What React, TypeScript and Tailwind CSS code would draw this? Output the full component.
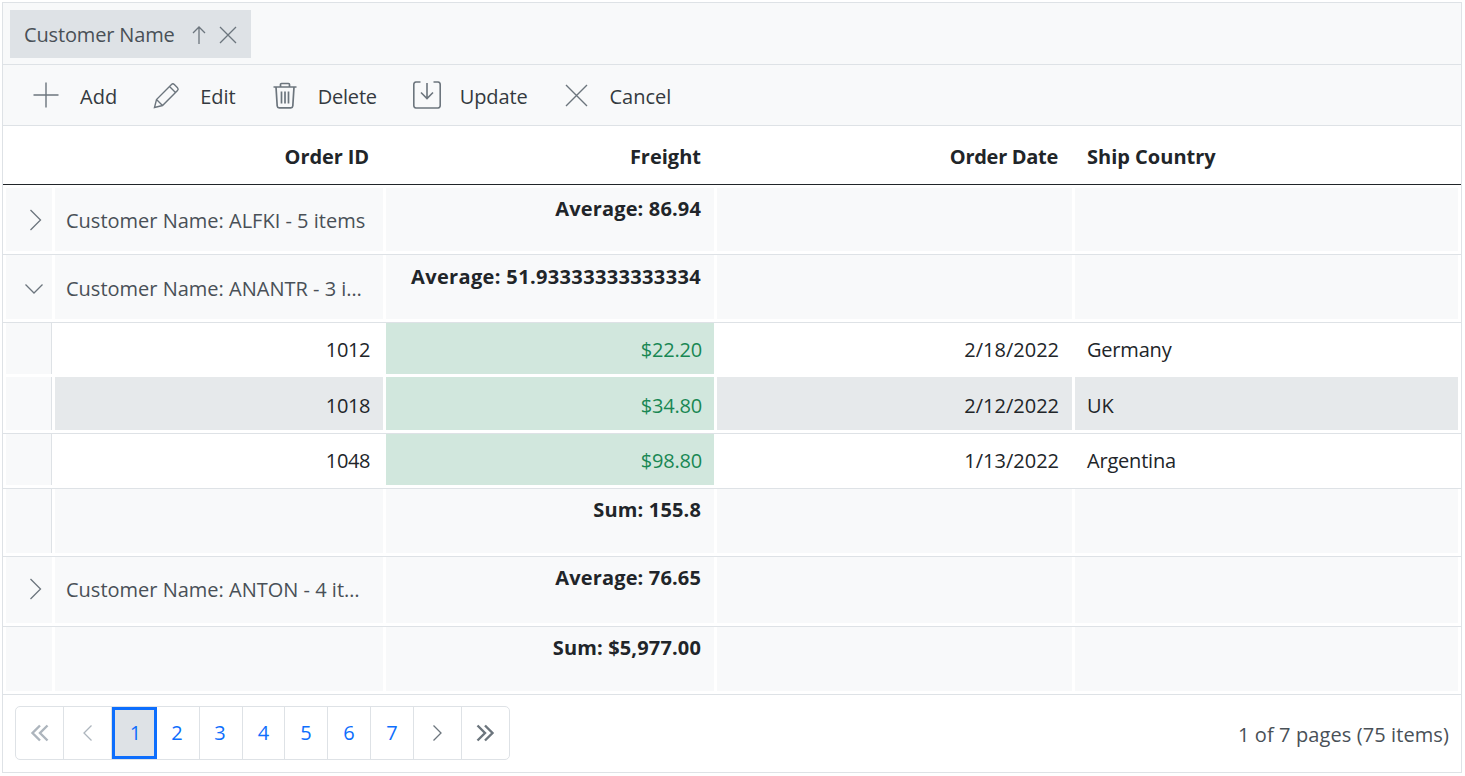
import React, { ReactNode } from 'react';

const rowCols = 'grid grid-cols-[46px_328px_328px_355px_383px] gap-x-[3px] pl-[3px]';

const Thin = ({ size = 28, stroke = 1.4, children }: { size?: number; stroke?: number; children: ReactNode }) => (
  <svg width={size} height={size} viewBox={`0 0 ${size} ${size}`} fill="none" stroke="currentColor" strokeWidth={stroke}>
    {children}
  </svg>
);

const ToolButton = ({ icon, label, gap, iconClass = '', labelClass = '' }: { icon: ReactNode; label: string; gap: string; iconClass?: string; labelClass?: string }) => (
  <div className={`flex items-center ${gap}`}>
    <span className={`text-[#6c757d] ${iconClass}`}>{icon}</span>
    <span className={`pt-[4px] text-[20px] text-[#343a40] ${labelClass}`}>{label}</span>
  </div>
);

const Cell = ({ children, className = '', h }: { children?: ReactNode; className?: string; h: string }) => (
  <div className={`flex items-center min-w-0 ${h} ${className}`}>{children}</div>
);

const GroupRow = ({ open, label, total, h, indent, wide, labelPad = 'pt-[2px]', totalPad = 'pt-[6px]' }: { open?: boolean; label: string; total: string; h: string; indent?: boolean; wide?: boolean; labelPad?: string; totalPad?: string }) => (
  <div className={`${rowCols} pb-[3px] border-b border-[#dee2e6]`}>
    <Cell h={h} className={`bg-[#f8f9fa] justify-center pl-[12px] text-[#6c757d] ${indent ? 'border-r border-[#dee2e6]' : ''} ${labelPad === 'pt-0' ? 'pb-[2px]' : ''}`}>
      {open === undefined ? null : open ? (
        <svg width="22" height="22" viewBox="0 0 22 22" fill="none" stroke="currentColor" strokeWidth="1.3" className="-ml-[3px] mt-[3px]">
          <path d="M2.5 6.5l8.5 8.5 8.5-8.5" />
        </svg>
      ) : (
        <svg width="22" height="22" viewBox="0 0 22 22" fill="none" stroke="currentColor" strokeWidth="1.3" className="ml-[1px]">
          <path d="M5.5 1l10 10-10 10" />
        </svg>
      )}
    </Cell>
    <Cell h={h} className={`bg-[#f8f9fa] pl-[11px] pr-[15px] ${labelPad} text-[#495057]`}>
      <span className="truncate text-[20px]">{label}</span>
    </Cell>
    <Cell h={h} className={`bg-[#f8f9fa] justify-end items-start pr-[13px] ${totalPad} font-bold text-[20px] text-[#212529] ${wide ? 'tracking-[0.35px]' : 'tracking-[0.15px]'}`}>
      {total}
    </Cell>
    <Cell h={h} className="bg-[#f8f9fa]" />
    <Cell h={h} className="bg-[#f8f9fa]" />
  </div>
);

const DataRow = ({ id, freight, date, country, selected, h, line }: { id: string; freight: string; date: string; country: string; selected?: boolean; h: string; line: boolean }) => {
  const bg = selected ? 'bg-[#e6e9eb]' : 'bg-white';
  const nudge = selected ? 'pt-[4px]' : 'pt-[2px]';
  return (
    <div className={`${rowCols} pb-[3px] ${line ? 'border-b border-[#dee2e6]' : ''}`}>
      <Cell h={h} className="bg-[#f8f9fa] border-r border-[#dee2e6]" />
      <Cell h={h} className={`${bg} ${nudge} justify-end pr-[13px] text-[20px] text-[#212529] tracking-[-0.4px]`}>{id}</Cell>
      <Cell h={h} className={`bg-[#d1e7dd] ${nudge} justify-end pr-[12px] text-[20px] text-[#198754] tracking-[-0.2px]`}>{freight}</Cell>
      <Cell h={h} className={`${bg} ${nudge} justify-end pr-[13px] text-[20px] text-[#212529]`}>{date}</Cell>
      <Cell h={h} className={`${bg} ${nudge} pl-[12px] text-[20px] text-[#212529] tracking-[-0.2px]`}>{country}</Cell>
    </div>
  );
};

const pageCell = 'flex items-center justify-center h-full border-r border-[#dee2e6]';

const pages = [
  { n: '2', w: 'w-[43px] pr-[2px]' },
  { n: '3', w: 'w-[43px] pr-[2px]' },
  { n: '4', w: 'w-[42px]' },
  { n: '5', w: 'w-[43px]' },
  { n: '6', w: 'w-[43px]' },
  { n: '7', w: 'w-[43px]' },
];

const Pager = () => (
  <div className="flex h-[54px] w-[495px] items-stretch rounded-[5px] border border-[#dee2e6] overflow-hidden text-[20px] text-[#0d6efd]">
    <div className={`${pageCell} w-[48px] text-[#adb5bd]`}>
      <svg width="22" height="22" viewBox="0 0 22 22" fill="none" stroke="currentColor" strokeWidth="2.4"><path d="M11 3.5L3.5 11l7.5 7.5M18.5 3.5L11 11l7.5 7.5" /></svg>
    </div>
    <div className={`${pageCell} w-[48px] text-[#adb5bd]`}>
      <svg width="16" height="16" viewBox="0 0 16 16" fill="none" stroke="currentColor" strokeWidth="1.3"><path d="M11.5 .5L4 8l7.5 7.5" /></svg>
    </div>
    <div className="flex items-center justify-center w-[45px] h-full pl-[2px] bg-[#dee2e6] border-[3px] border-[#0d6efd]">1</div>
    {pages.map(p => (
      <div key={p.n} className={`${pageCell} ${p.w}`}>{p.n}</div>
    ))}
    <div className={`${pageCell} w-[48px] pr-[2px] text-[#6c757d]`}>
      <svg width="16" height="16" viewBox="0 0 16 16" fill="none" stroke="currentColor" strokeWidth="1.3"><path d="M4.5 .5L12 8l-7.500 7.500" /></svg>
    </div>
    <div className="flex items-center justify-center w-[47px] h-full pr-[2px] text-[#6c757d]">
      <svg width="22" height="22" viewBox="0 0 22 22" fill="none" stroke="currentColor" strokeWidth="2.4"><path d="M3.5 3.5L11 11l-7.5 7.5M11 3.5l7.5 7.5-7.5 7.5" /></svg>
    </div>
  </div>
);

export default function App() {
  return (
    <div className="p-[2px] w-[1464px] bg-white font-['Open_Sans',sans-serif]">
      <div className="w-[1460px] border border-[#dee2e6]">
        {/* group panel */}
        <div className="h-[62px] bg-[#f8f9fa] border-b border-[#dee2e6] pl-[7px] pt-[7px]">
          <div className="flex items-center h-[48px] w-[241px] bg-[#dee2e6] pl-[14px] text-[20px] text-[#495057]">
            <span className="pt-[2px] tracking-[-0.15px]">Customer Name</span>
            <svg width="16" height="20" viewBox="0 0 16 20" fill="none" stroke="#6c757d" strokeWidth="1.3" className="ml-[16px] mt-[2px]"><path d="M8 19V2M2 8l6-6 6 6" /></svg>
            <svg width="18" height="18" viewBox="0 0 18 18" fill="none" stroke="#6c757d" strokeWidth="1.3" className="ml-[12px] mt-[2px]"><path d="M1 1l16 16M17 1L1 17" /></svg>
          </div>
        </div>
        {/* toolbar */}
        <div className="flex items-center h-[61px] bg-[#f8f9fa] border-b border-[#dee2e6] pl-[29px]">
          <ToolButton gap="gap-[20px]" label="Add" icon={<Thin><path d="M14 1.500v25M1.500 14h25" /></Thin>} />
          <ToolButton gap="gap-[19px]" iconClass="ml-[36px]" label="Edit" icon={
            <Thin><path d="M1.500 26.500l2-8L18.500 3.500a2 2 0 0 1 2.800 0l3.200 3.200a2 2 0 0 1 0 2.800L9.500 24.500zM3.500 18.500l6 6M16.500 5.500l6 6" /></Thin>
          } />
          <ToolButton gap="gap-[19px]" iconClass="ml-[35px]" labelClass="tracking-[-0.2px]" label="Delete" icon={
            <Thin stroke={1.7}><path d="M2.500 6h23M9.500 6V3.500a1 1 0 0 1 1-1h7a1 1 0 0 1 1 1V6M5 6l1.200 19a2 2 0 0 0 2 1.800h11.600a2 2 0 0 0 2-1.800L23 6M10.500 10.500v12M14 10.500v12M17.500 10.500v12" /></Thin>
          } />
          <ToolButton gap="gap-[19px]" iconClass="ml-[36px]" labelClass="tracking-[-0.15px]" label="Update" icon={
            <Thin stroke={1.6}><path d="M7.500 1H3a2.500 2.500 0 0 0-2.200 2.500v21A2.500 2.500 0 0 0 3 27h22a2.500 2.500 0 0 0 2.200-2.500v-21A2.500 2.500 0 0 0 25 1h-4.500M14 2v15M8 11.500l6 6 6-6" /></Thin>
          } />
          <ToolButton gap="gap-[21px]" iconClass="ml-[35px]" label="Cancel" icon={<Thin size={26}><path d="M4 3l21 21M25 3L4 24" /></Thin>} />
        </div>
        {/* header */}
        <div className={`${rowCols} h-[59px] pt-[3px] border-b border-[#212529] text-[20px] font-bold text-[#212529] items-center`}>
          <div />
          <div className="text-right pr-[14px] tracking-[-0.1px]">Order ID</div>
          <div className="text-right pr-[13px]">Freight</div>
          <div className="text-right pr-[14px] tracking-[-0.3px]">Order Date</div>
          <div className="pl-[12px]">Ship Country</div>
        </div>
        <div className="pt-[3px]">
          <GroupRow h="h-[63px]" label="Customer Name: ALFKI - 5 items" total="Average: 86.94" open={false} />
          <GroupRow h="h-[64px]" label="Customer Name: ANANTR - 3 items" total="Average: 51.93333333333334" open wide labelPad="pt-[4px]" totalPad="pt-[7px]" />
          <DataRow h="h-[51px]" line={false} id="1012" freight="$22.20" date="2/18/2022" country="Germany" />
          <DataRow h="h-[53px]" line selected id="1018" freight="$34.80" date="2/12/2022" country="UK" />
          <DataRow h="h-[51px]" line id="1048" freight="$98.80" date="1/13/2022" country="Argentina" />
          <GroupRow h="h-[64px]" label="" total="Sum: 155.8" indent />
          <GroupRow h="h-[66px]" label="Customer Name: ANTON - 4 items" total="Average: 76.65" open={false} labelPad="pt-0" />
          <GroupRow h="h-[64px]" label="" total="Sum: $5,977.00" />
        </div>
        {/* pager */}
        <div className="flex items-center justify-between h-[77px] px-[12px] pb-[2px]">
          <Pager />
          <span className="pt-[4px] text-[20px] text-[#495057] tracking-[0.1px]">1 of 7 pages (75 items)</span>
        </div>
      </div>
    </div>
  );
}
